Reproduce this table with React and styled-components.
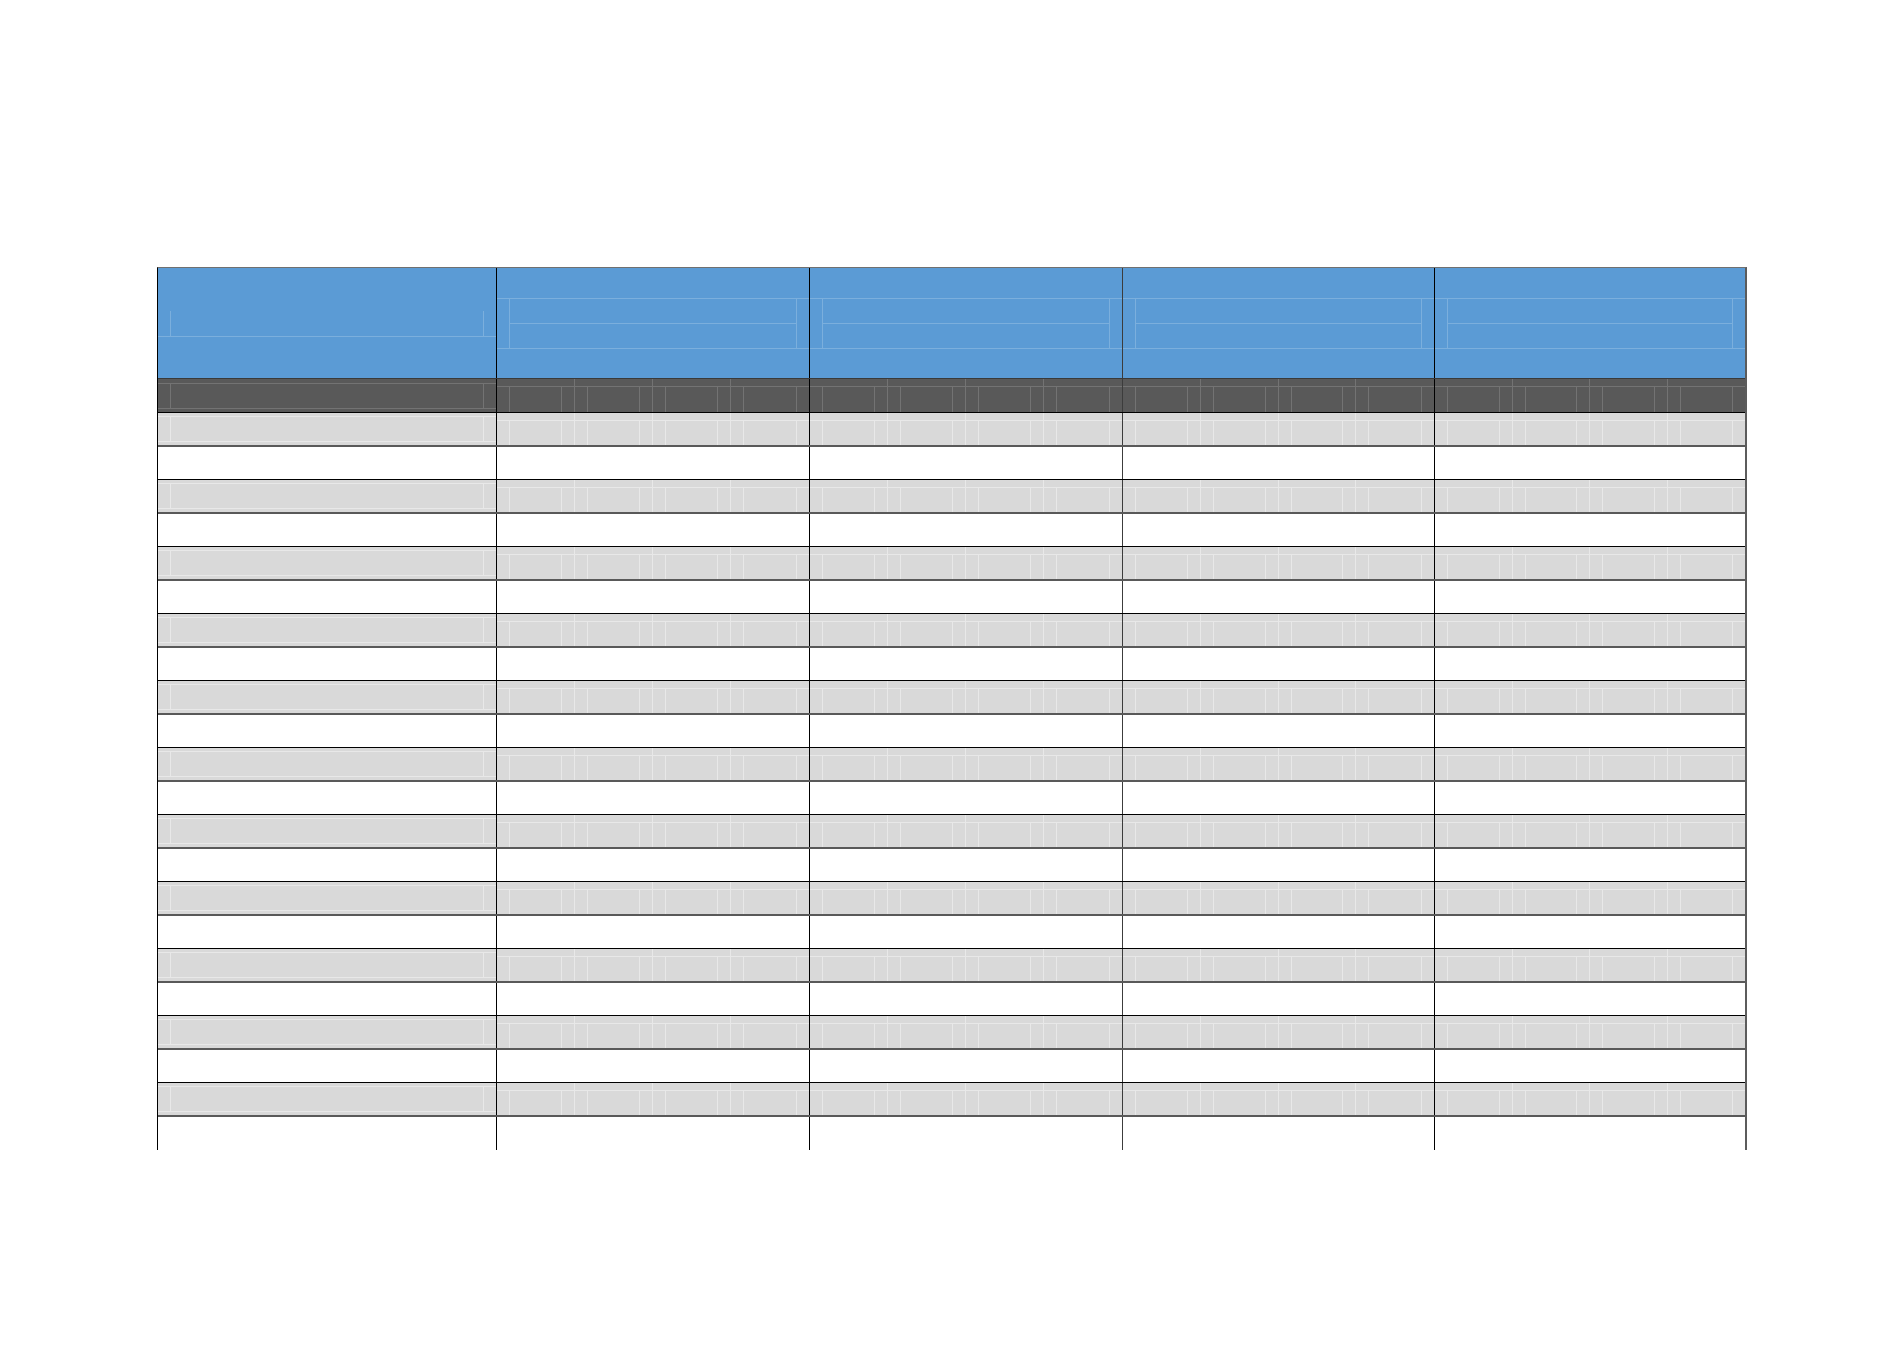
import React from 'react';
import styled, { createGlobalStyle } from 'styled-components';

const GlobalStyle = createGlobalStyle`
  html, body {
    margin: 0;
    padding: 0;
    background: #ffffff;
    font-family: 'Liberation Sans', Arial, sans-serif;
  }
`;

const fills = {
  header: '#5b9bd5',
  dark: '#595959',
  gray: '#d9d9d9',
  white: '#ffffff',
};

const heights = {
  header: '111px',
  dark: '34px',
  gray: '34px',
  white: '33px',
};

const bottoms = {
  header: '1px solid #3a3a3a',
  dark: '1px solid #000000',
  gray: '2px solid #595959',
  white: '1px solid #000000',
};

const faint = {
  header: 'rgba(255, 255, 255, 0.2)',
  dark: 'rgba(255, 255, 255, 0.16)',
  gray: 'rgba(255, 255, 255, 0.4)',
  white: 'transparent',
};

const dividers = ['#000000', '#000000', '#3c3c3c', '#000000', 'transparent'];

const Page = styled.div`
  width: 1902px;
  min-height: 1358px;
  box-sizing: border-box;
  padding: 267px 0 0 157px;
`;

const Table = styled.div`
  width: 1590px;
  box-sizing: border-box;
  border-top: 1px solid #707070;
  border-left: 1px solid #000000;
  border-right: 2px solid #5c5c5c;
`;

const Row = styled.div`
  display: grid;
  grid-template-columns: 339px 313px 313px 312px 310px;
  height: ${p => heights[p.$kind]};
  box-sizing: border-box;
  background: ${p => fills[p.$kind]};
  border-bottom: ${p => (p.$last ? 'none' : bottoms[p.$kind])};
`;

const Cell = styled.div`
  min-width: 0;
  height: 100%;
  box-sizing: border-box;
  border-right: ${p => (p.$divider === 'transparent' ? 'none' : `1px solid ${p.$divider}`)};
  display: flex;
  flex-direction: column;
`;

const Band = styled.div`
  margin-top: ${p => p.$offset}px;
  height: ${p => p.$height}px;
  box-sizing: border-box;
  padding: 0 12px;
  border-top: ${p => (p.$top ? `1px solid ${p.$line}` : 'none')};
  border-bottom: ${p => (p.$bottom ? `1px solid ${p.$line}` : 'none')};
  display: flex;
`;

const Ticks = styled.div`
  flex: 1;
  box-sizing: border-box;
  border-left: 1px solid ${p => p.$line};
  border-right: 1px solid ${p => p.$line};
  display: flex;
  flex-direction: column;
`;

const Half = styled.div`
  flex: 1;
  border-bottom: ${p => (p.$split ? `1px solid ${p.$line}` : 'none')};
`;

const Quarters = styled.div`
  flex: 1;
  display: grid;
  grid-template-columns: repeat(4, 1fr);
`;

const Quarter = styled.div`
  box-sizing: border-box;
  padding-top: 7px;
  border-right: ${p => (p.$end ? 'none' : `1px solid ${p.$line}`)};
  display: flex;
  flex-direction: column;
`;

const Strip = styled.div`
  flex: 1;
  box-sizing: border-box;
  padding: 0 12px;
  border-top: 1px solid ${p => p.$line};
  display: flex;
`;

function FirstCell({ kind }) {
  const line = faint[kind];
  if (kind === 'white') return null;
  if (kind === 'header') {
    return (
      <Band $offset={43} $height={26} $bottom $line={line}>
        <Ticks $line={line} />
      </Band>
    );
  }
  return (
    <Band $offset={kind === 'dark' ? 4 : 3} $height={26} $top $bottom $line={line}>
      <Ticks $line={line} />
    </Band>
  );
}

function DataCell({ kind }) {
  const line = faint[kind];
  if (kind === 'white') return null;
  if (kind === 'header') {
    return (
      <Band $offset={30} $height={51} $top $bottom $line={line}>
        <Ticks $line={line}>
          <Half $split $line={line} />
          <Half />
        </Ticks>
      </Band>
    );
  }
  return (
    <Quarters>
      {[0, 1, 2, 3].map(q => (
        <Quarter key={q} $end={q === 3} $line={line}>
          <Strip $line={line}>
            <Ticks $line={line} />
          </Strip>
        </Quarter>
      ))}
    </Quarters>
  );
}

const rows = [
  'header',
  'dark',
  ...Array.from({ length: 22 }, (_, i) => (i % 2 === 0 ? 'gray' : 'white')),
];

function App() {
  return (
    <Page>
      <GlobalStyle />
      <Table>
        {rows.map((kind, r) => (
          <Row key={r} $kind={kind} $last={r === rows.length - 1}>
            {dividers.map((divider, c) => (
              <Cell key={c} $divider={divider}>
                {c === 0 ? <FirstCell kind={kind} /> : <DataCell kind={kind} />}
              </Cell>
            ))}
          </Row>
        ))}
      </Table>
    </Page>
  );
}

export default App;
